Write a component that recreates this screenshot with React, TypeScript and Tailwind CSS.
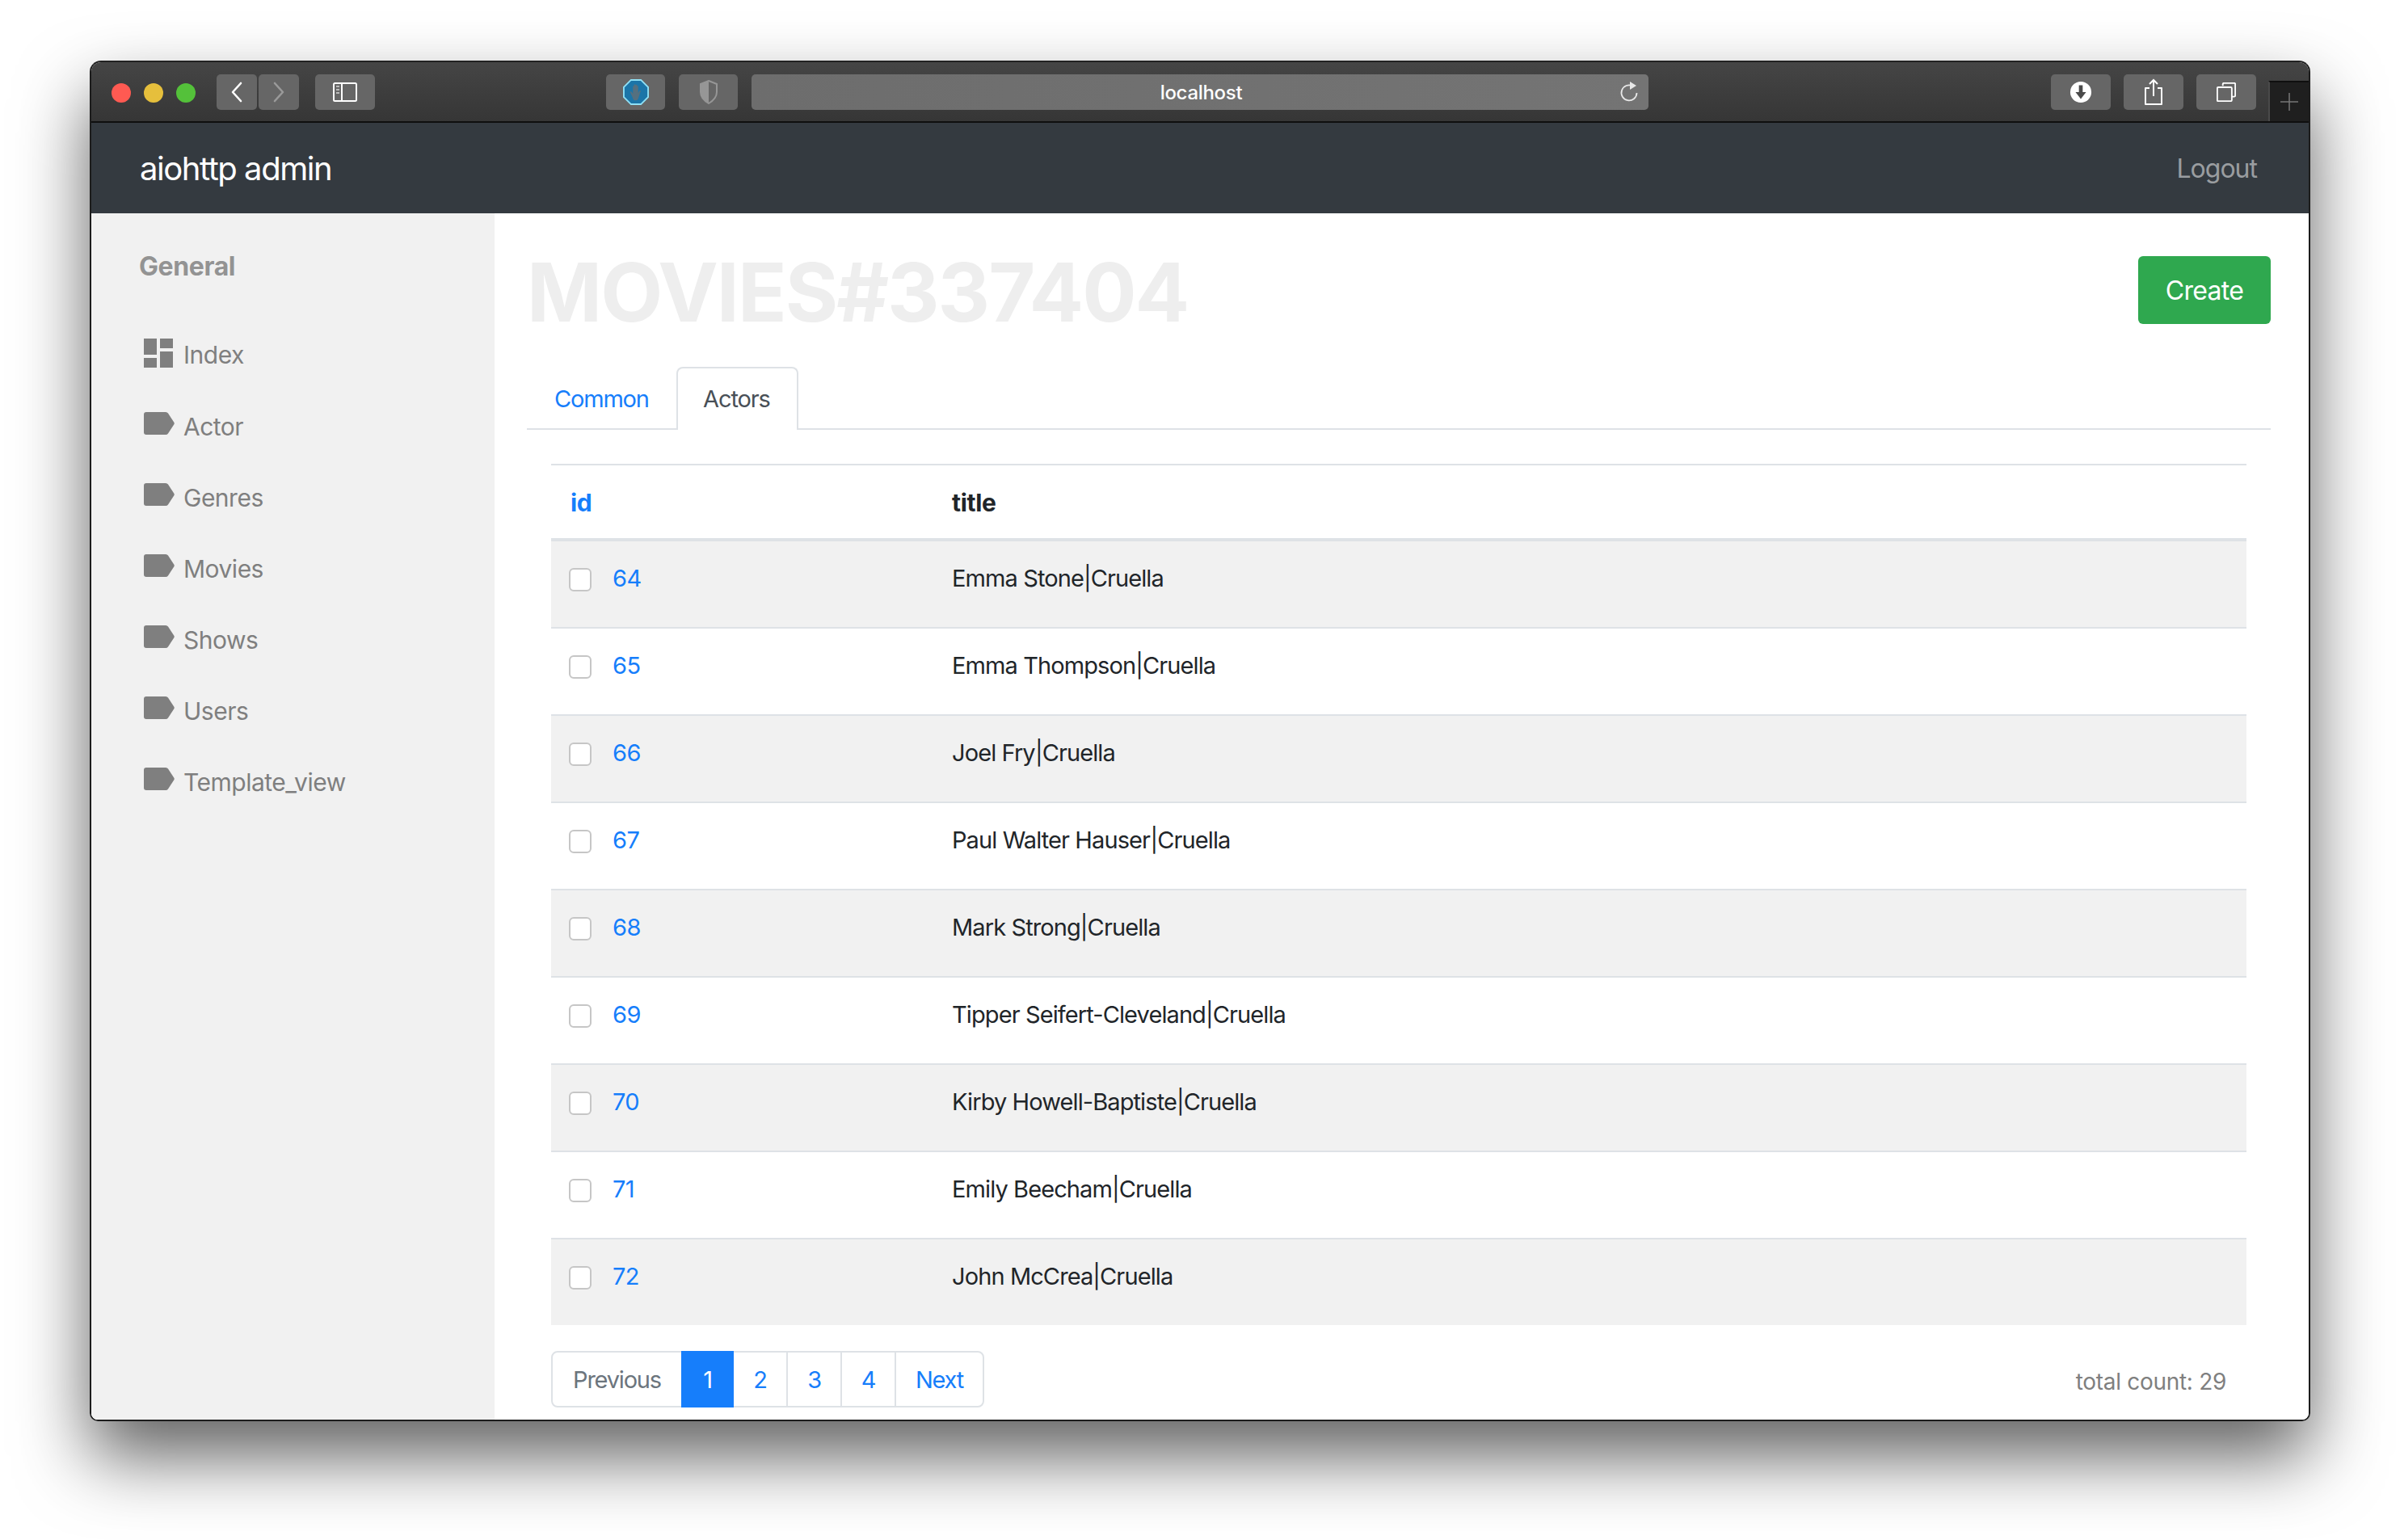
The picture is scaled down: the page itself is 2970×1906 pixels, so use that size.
const rows = [
  [64, "Emma Stone|Cruella"],
  [65, "Emma Thompson|Cruella"],
  [66, "Joel Fry|Cruella"],
  [67, "Paul Walter Hauser|Cruella"],
  [68, "Mark Strong|Cruella"],
  [69, "Tipper Seifert-Cleveland|Cruella"],
  [70, "Kirby Howell-Baptiste|Cruella"],
  [71, "Emily Beecham|Cruella"],
  [72, "John McCrea|Cruella"],
] as const;

const nav = ["Actor", "Genres", "Movies", "Shows", "Users", "Template_view"];

function Tag() {
  return (
    <svg width="38" height="28" viewBox="0 0 38 28" className="shrink-0">
      <path d="M3 0H27Q29 0 30 1.500L37.500 13Q38 14 37.500 15L30 26.500Q29 28 27 28H3Q0 28 0 25V3Q0 0 3 0Z" fill="#7f7f7f" />
    </svg>
  );
}

function Dash() {
  return (
    <svg width="36" height="36" viewBox="0 0 36 36" className="shrink-0">
      <path d="M0 0H16V20H0ZM20 0H36V12H20ZM20 16H36V36H20ZM0 24H16V36H0Z" fill="#7f7f7f" />
    </svg>
  );
}

function ToolBtn({ w, children }: { w: string; children?: React.ReactNode }) {
  return <div className={`${w} h-[44px] rounded-[5px] bg-[#666666] flex items-center justify-center`}>{children}</div>;
}

export default function App() {
  return (
    <div className="w-[2970px] h-[1906px] bg-white pl-[111px] pt-[75px] overflow-hidden font-['Inter','Liberation_Sans',sans-serif]">
      <div className="w-[2748px] h-[1684px] rounded-t-[14px] rounded-b-[10px] border-2 border-[#1c1c1c] border-t-[#222] overflow-hidden flex flex-col shadow-[0_44px_88px_rgba(0,0,0,0.62)]">
        <div className="h-[75px] shrink-0 bg-gradient-to-b from-[#454545] to-[#363636] border-b-2 border-[#0f0f0f] flex relative">
          <div className="flex gap-4 pl-[25px] pt-[26px]">
            <div className="w-[24px] h-[24px] rounded-full bg-[#ff5a52]" />
            <div className="w-[24px] h-[24px] rounded-full bg-[#e6bf3c]" />
            <div className="w-[24px] h-[24px] rounded-full bg-[#54c13a]" />
          </div>
          <div className="flex pl-[26px] pt-[15px] gap-[2px]">
            <ToolBtn w="w-[50px]">
              <svg width="18" height="26" viewBox="0 0 18 26"><path d="M14 2L4 13L14 24" fill="none" stroke="#fff" strokeWidth="2.600" strokeLinecap="round" strokeLinejoin="round" /></svg>
            </ToolBtn>
            <ToolBtn w="w-[50px]">
              <svg width="18" height="26" viewBox="0 0 18 26"><path d="M4 2L14 13L4 24" fill="none" stroke="#9a9a9a" strokeWidth="2.600" strokeLinecap="round" strokeLinejoin="round" /></svg>
            </ToolBtn>
          </div>
          <div className="pl-[20px] pt-[15px]">
            <ToolBtn w="w-[74px]">
              <svg width="30" height="24" viewBox="0 0 30 24">
                <rect x="1" y="1" width="28" height="22" rx="1.500" fill="none" stroke="#fff" strokeWidth="2" />
                <path d="M11 1V23" stroke="#fff" strokeWidth="2" />
                <path d="M4 5H8M4 9H8M4 13H8" stroke="#bbb" strokeWidth="2" />
              </svg>
            </ToolBtn>
          </div>
          <div className="pl-[286px] pt-[15px]">
            <ToolBtn w="w-[73px]">
              <svg width="32" height="32" viewBox="0 0 34 34">
                <path d="M10.500 1H23.500L33 10.500V23.500L23.500 33H10.500L1 23.500V10.500Z" fill="#1b75a8" stroke="#8fe0f5" strokeWidth="2" />
                <path d="M12.500 24L9.500 17.500C9 16 10.500 15.500 11.500 17L13 19V9.500C13 8.500 14.500 8.500 14.500 9.500V16V7.500C14.500 6.500 16.500 6.500 16.500 7.500V16V8C16.500 7 18.500 7 18.500 8V16V9.500C18.500 8.500 20 8.500 20 9.500V18L21.500 15.500C22.500 14.500 23.500 15 23 16.500L20.500 24C20 26.500 19 28 17 28H15.500C14 28 13 26 12.500 24Z" fill="#55707f" />
              </svg>
            </ToolBtn>
          </div>
          <div className="pl-[17px] pt-[15px]">
            <ToolBtn w="w-[73px]">
              <svg width="24" height="30" viewBox="0 0 24 30">
                <path d="M12 1L22 5V15C22 22 17 26 12 29C7 26 2 22 2 15V5Z" fill="none" stroke="#969696" strokeWidth="2" />
                <path d="M12 1L2 5V15C2 22 7 26 12 29Z" fill="#969696" />
              </svg>
            </ToolBtn>
          </div>
          <div className="pl-[17px] pt-[15px]">
            <div className="w-[1110px] h-[44px] rounded-[5px] bg-gradient-to-r from-[#6d6d6d] to-[#747474] flex items-center relative">
              <span className="w-full text-center text-[24px] pt-[2px] pl-[3px] text-white font-medium tracking-[-0.3px]">localhost</span>
              <svg width="26" height="28" viewBox="0 0 26 28" className="absolute right-[11px] top-[8px]">
                <path d="M17.500 6.500A9.500 9.500 0 1 0 22.500 15" fill="none" stroke="#e8e8e8" strokeWidth="1.800" />
                <path d="M14 1L22 6L14 11Z" fill="#e8e8e8" />
              </svg>
            </div>
          </div>
          <div className="ml-auto pr-[65px] pt-[15px] flex gap-[16px]">
            <ToolBtn w="w-[74px]">
              <svg width="28" height="28" viewBox="0 0 30 30">
                <circle cx="15" cy="15" r="14" fill="#fff" />
                <path d="M12.500 6H17.500V15H22L15 24L8 15H12.500Z" fill="#4a4a4a" />
              </svg>
            </ToolBtn>
            <ToolBtn w="w-[74px]">
              <svg width="26" height="34" viewBox="0 0 26 34">
                <path d="M8 12H3V32H23V12H18" fill="none" stroke="#fff" strokeWidth="2" strokeLinejoin="round" />
                <path d="M13 2V22M8 7L13 2L18 7" fill="none" stroke="#fff" strokeWidth="2" />
              </svg>
            </ToolBtn>
            <ToolBtn w="w-[74px]">
              <svg width="24" height="24" viewBox="0 0 28 28">
                <path d="M9 5V2.500Q9 1 10.500 1H25.500Q27 1 27 2.500V19Q27 20.500 25.500 20.500H22" fill="none" stroke="#fff" strokeWidth="2.200" />
                <rect x="1" y="7" width="21" height="20" rx="1.500" fill="none" stroke="#fff" strokeWidth="2.200" />
              </svg>
            </ToolBtn>
          </div>
          <div className="absolute right-0 bottom-0 w-[50px] h-[50px] bg-[#1f1f1f] border-l-2 border-l-[#4a4a4a] border-t-2 border-t-[#0f0f0f] flex items-center justify-center">
            <svg width="24" height="24" viewBox="0 0 24 24"><path d="M12 1V23M1 12H23" stroke="#777" strokeWidth="1.500" /></svg>
          </div>
        </div>
        <div className="h-[112px] shrink-0 bg-[#343a40] flex items-center justify-between pl-[60px] pr-[64px]">
          <span className="text-[40px] pt-[2px] text-white tracking-[-1.45px]">aiohttp admin</span>
          <span className="text-[32px] pt-[2px] text-[#9a9da0] tracking-[-1px]">Logout</span>
        </div>
        <div className="flex-1 flex min-h-0 bg-white">
          <div className="w-[499px] shrink-0 bg-[#f1f1f1] pl-[59px] pt-[46px]">
            <div className="text-[32px] leading-[40px] font-bold text-[#939393] tracking-[-0.4px]">General</div>
            <div className="pt-[59px] flex flex-col">
              <div className="h-[96px] flex gap-[13px] pl-[6px] pt-[10px]">
                <Dash />
                <span className="text-[30px] leading-[40px] text-[#7f7f7f] tracking-[-0.5px]">Index</span>
              </div>
              {nav.map((n) => (
                <div key={n} className="h-[88px] flex gap-[11px] pl-[6px]">
                  <div className="pt-[5px]"><Tag /></div>
                  <span className="text-[30px] leading-[40px] mt-[3px] text-[#7f7f7f] tracking-[-0.5px]">{n}</span>
                </div>
              ))}
            </div>
          </div>
          <div className="flex-1 min-w-0 pl-[40px] pr-[47px]">
            <div className="flex justify-between items-start pt-[53px] h-[190px]">
              <h1 className="text-[100px] leading-[100px] -mt-[5px] font-bold text-[#eeeeee] tracking-[-2px]">MOVIES#337404</h1>
              <button className="w-[164px] h-[84px] rounded-[6px] bg-[#2fa84f] pt-[2px] text-white text-[32px] tracking-[-0.7px]">Create</button>
            </div>
            <div className="flex border-b-2 border-[#dee2e6] h-[78px]">
              <div className="w-[185px] pl-[34px] pt-[20px] text-[29px] leading-[40px] text-[#167efb] tracking-[-1.2px]">Common</div>
              <div className="w-[151px] h-[78px] bg-white border-2 border-b-0 border-[#dee2e6] rounded-t-[8px] pl-[31px] pt-[18px] text-[29px] leading-[40px] text-[#495057] tracking-[-1.1px]">Actors</div>
            </div>
            <div className="pt-[42px] pl-[30px] pr-[30px]">
              <div className="border-t-2 border-[#dee2e6] border-b-4 h-[96px] pt-[2px] flex items-center text-[30px] font-bold text-[#212529] tracking-[-0.3px]">
                <span className="w-[496px] pl-[24px] text-[#167efb]">id</span>
                <span>title</span>
              </div>
              {rows.map(([id, title], i) => (
                <div key={id} className={`${i === 0 ? "h-[106px] pt-[24px] border-transparent" : "h-[108px] pt-[26px] border-[#dee2e6]"} flex items-start text-[29px] leading-[40px] border-t-2 ${i % 2 === 0 ? "bg-[#f1f1f1]" : "bg-white"}`}>
                  <div className="w-[22px] shrink-0" />
                  <div className="w-[28px] h-[29px] mt-[7px] rounded-[6px] bg-white border-2 border-[#c6c6c6] shrink-0" />
                  <span className="w-[446px] pl-[26px] text-[#167efb] tracking-[-0.6px] shrink-0">{id}</span>
                  <span className="text-[#212529] tracking-[-0.9px]">{title}</span>
                </div>
              ))}
              <div className="flex justify-between items-start pt-[32px]">
                <div className="flex h-[70px] border-2 border-[#dee2e6] rounded-[8px] text-[29px] tracking-[-1.2px] text-[#167efb]">
                  <div className="w-[159px] flex items-center justify-center pt-[2px] text-[#6c757d]">Previous</div>
                  <div className="w-[65px] -my-[2px] flex items-center justify-center pt-[2px] bg-[#167efb] text-white">1</div>
                  <div className="w-[65px] flex items-center justify-center pt-[2px]">2</div>
                  <div className="w-[67px] flex items-center justify-center pt-[2px] border-l-2 border-[#dee2e6]">3</div>
                  <div className="w-[67px] flex items-center justify-center pt-[2px] border-l-2 border-[#dee2e6]">4</div>
                  <div className="w-[109px] flex items-center justify-center pt-[2px] border-l-2 border-[#dee2e6]">Next</div>
                </div>
                <div className="text-[28px] leading-[40px] pt-[18px] pr-[25px] text-[#7f7f7f] tracking-[-0.3px]">total count: 29</div>
              </div>
            </div>
          </div>
        </div>
      </div>
    </div>
  );
}
